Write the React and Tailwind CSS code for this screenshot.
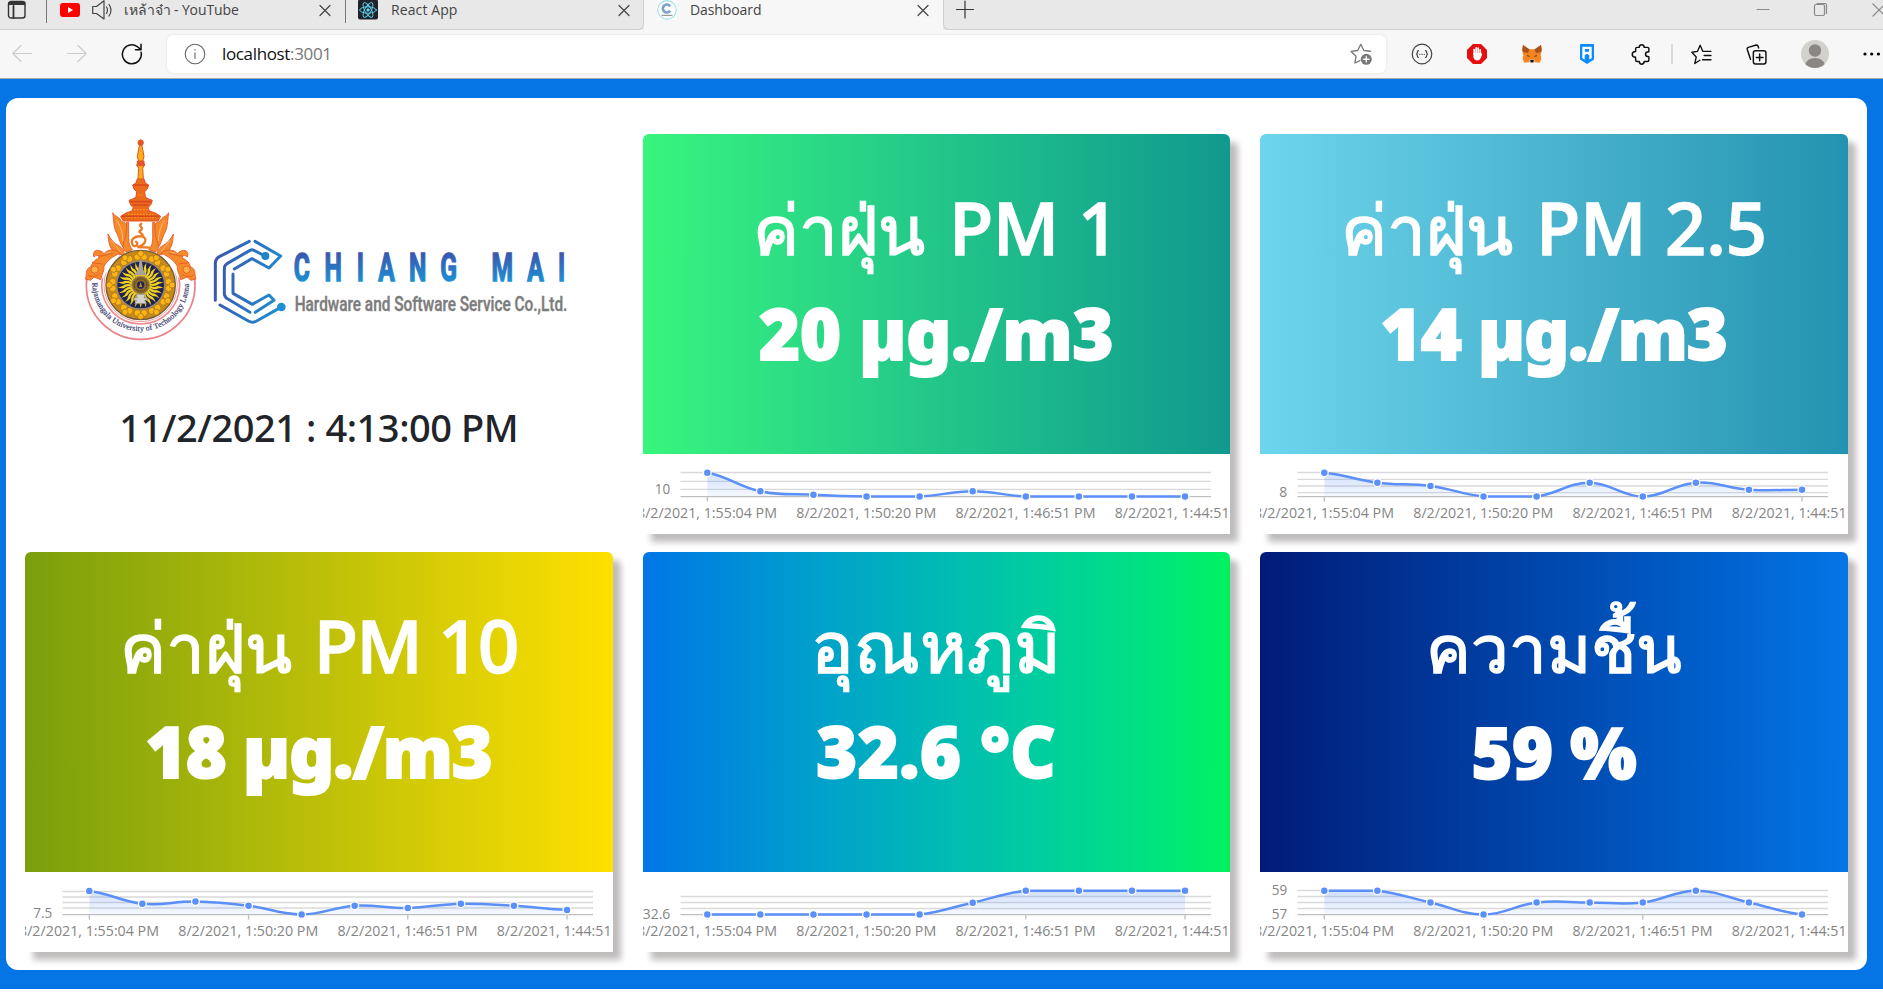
import React from "react";

const TIMES = ["8/2/2021, 1:55:04 PM", "8/2/2021, 1:50:20 PM", "8/2/2021, 1:46:51 PM", "8/2/2021, 1:44:51 PM"];

const CARDS = [
  {
    id: "pm1", thai: "ค่าฝุ่น", latin: "PM 1", value: "20 µg./m3",
    tone: "bg-linear-to-r from-[#38f57c] to-[#11998e]",
    titleFit: "text-[69px]", latinFit: "ml-[5px]", valueFit: "tracking-[0px]",
    grid: [18.5, 27.3, 35.3], pts: [18.7, 37.3, 40.7, 42.5, 42.5, 37.3, 42.5, 42.5, 42.5, 42.5],
    labels: [["10", 40]],
  },
  {
    id: "pm25", thai: "ค่าฝุ่น", latin: "PM 2.5", value: "14 µg./m3",
    tone: "bg-linear-to-r from-[#6dd5ed] to-[#2193b0]",
    titleFit: "text-[69px]", latinFit: "ml-[5px]", valueFit: "tracking-[-0.9px]",
    grid: [18.5, 25.3, 32, 38.7], pts: [18.7, 28.7, 32, 42.5, 42.5, 28.7, 42.5, 28.7, 35.7, 35.7],
    labels: [["8", 43]],
  },
  {
    id: "pm10", thai: "ค่าฝุ่น", latin: "PM 10", value: "18 µg./m3",
    tone: "bg-linear-to-r from-[#799f0c] to-[#ffe000]",
    titleFit: "text-[69px]", latinFit: "ml-[5px] tracking-[-1.5px]", valueFit: "tracking-[-0.9px]",
    grid: [19.5, 25, 30.5, 36], pts: [18.9, 31.7, 29.5, 33.7, 42.4, 33.7, 36, 31.7, 33.8, 38],
    labels: [["7.5", 46]],
  },
  {
    id: "temp", thai: "อุณหภูมิ", latin: "", value: "32.6 °C",
    tone: "bg-linear-to-r from-[#0575e6] to-[#00f260]",
    titleFit: "text-[71px]", latinFit: "", valueFit: "tracking-[0.5px]",
    grid: [24.5, 30.5, 36.5], pts: [42.5, 42.5, 42.5, 42.5, 42.5, 30.7, 18.7, 18.7, 18.7, 18.7],
    labels: [["32.6", 47]],
  },
  {
    id: "hum", thai: "ความชื้น", latin: "", value: "59 %",
    tone: "bg-linear-to-r from-[#021b79] to-[#0575e6]",
    titleFit: "text-[67px]", latinFit: "", valueFit: "tracking-[-0.5px]",
    grid: [18.5, 24.5, 30.5, 36.5], pts: [18.7, 18.7, 30.5, 42.5, 30.5, 30.5, 30.5, 18.7, 30.5, 42.5],
    labels: [["59", 23], ["57", 46.7]],
  },
];

const px = (i) => 64.3 + i * 53.08;

// Smoothed line whose control points never leave the value range.
function smooth(ys) {
  const lo = Math.min(...ys), hi = Math.max(...ys);
  const clamp = (v) => Math.max(lo, Math.min(hi, v));
  let d = `M${px(0)},${ys[0]}`;
  for (let i = 0; i < ys.length - 1; i++) {
    const a = ys[Math.max(i - 1, 0)], b = ys[i], c = ys[i + 1], e = ys[Math.min(i + 2, ys.length - 1)];
    const c1 = clamp(b + (c - a) * 0.2), c2 = clamp(c - (e - b) * 0.2);
    d += `C${px(i + 0.4)},${c1} ${px(i + 0.6)},${c2} ${px(i + 1)},${c}`;
  }
  return d;
}

function Chart({ id, grid, pts, labels }) {
  const line = smooth(pts);
  return (
    <svg className="block h-20 w-full font-['Open_Sans',sans-serif] text-[15px]" viewBox="0 0 587.5 80">
      <defs>
        <linearGradient id={`area-${id}`} x1="0" y1="0" x2="0" y2="1">
          <stop offset="0" stopColor="#5b8ff9" stopOpacity="0.28" />
          <stop offset="1" stopColor="#5b8ff9" stopOpacity="0.06" />
        </linearGradient>
      </defs>
      {grid.map((y) => <path key={y} d={`M37.5,${y}H568`} stroke="#d9d9d9" strokeWidth="1.3" />)}
      <path d="M37.5,42.6H568" stroke="#bfbfbf" strokeWidth="1.3" />
      {[0, 3, 6, 9].map((i) => <path key={i} d={`M${px(i)},42.6v5`} stroke="#bfbfbf" strokeWidth="1.3" />)}
      <path d={`${line}V42.6H${px(0)}Z`} fill={`url(#area-${id})`} />
      <path d={line} fill="none" stroke="#5b8ff9" strokeWidth="2.5" />
      {pts.map((y, i) => <circle key={i} cx={px(i)} cy={y} r="3.9" fill="#5b8ff9" stroke="#fff" strokeWidth="1.3" />)}
      {labels.map(([t, y]) => (
        <text key={t} x="27.3" y={y} textAnchor="end" fill="#858585" textLength={{ 1: 8, 2: 15.5, 3: 19, 4: 27.5 }[t.length]} lengthAdjust="spacingAndGlyphs">{t}</text>
      ))}
      {TIMES.map((t, i) => (
        <text key={t} x={px(i * 3) - 70.3} y="64.3" fill="#858585" textLength="140" lengthAdjust="spacingAndGlyphs">{t}</text>
      ))}
    </svg>
  );
}

function Card(c) {
  return (
    <section className="h-[400px] overflow-hidden rounded-t-md bg-white">
      <div className={`flex h-80 flex-col items-center gap-[19px] pt-[50px] text-[72px] leading-[86px] whitespace-nowrap text-white font-['Noto_Sans',sans-serif] ${c.tone}`}>
        <h2 className="font-medium [-webkit-text-stroke:1.6px_white]">
          <span className={c.titleFit}>{c.thai}</span>
          {c.latin && <span className={c.latinFit}> {c.latin}</span>}
        </h2>
        <p className={`text-[70px] font-black [-webkit-text-stroke:2px_white] ${c.valueFit}`}>{c.value}</p>
      </div>
      <Chart {...c} />
    </section>
  );
}

function Rays() {
  const rays = [];
  for (let i = 0; i < 26; i++) {
    rays.push(<path key={i} d="M-4,-26Q5,-40 -3,-50Q-4,-58 1,-69Q1,-56 6,-49Q10,-40 4,-26Z" transform={`rotate(${(i * 360) / 26})`} />);
  }
  return <g fill="#f2d21f">{rays}</g>;
}

function Petals() {
  const petals = [];
  for (let i = 0; i < 12; i++) {
    petals.push(
      <g key={i} transform={`rotate(${i * 30})`}>
        <circle cx="-10" cy="-84" r="10" />
        <circle cx="10" cy="-84" r="10" />
        <circle cx="0" cy="-94" r="9" />
      </g>
    );
  }
  return <g fill="#fdb515" stroke="#a8741a" strokeWidth="2.2">{petals}</g>;
}

function Wing() {
  return (
    <g fill="#f58a2a" stroke="#e4552a" strokeWidth="2.5" strokeLinejoin="round">
      <path d="M-84,-217C-80,-190 -82,-172 -70,-152C-64,-138 -62,-124 -52,-112C-42,-126 -40,-150 -42,-180C-46,-192 -58,-186 -62,-198C-68,-206 -78,-206 -84,-217Z" />
      <path d="M-98,-153C-96,-130 -96,-116 -80,-98L-50,-88C-48,-100 -54,-112 -66,-118C-78,-124 -90,-136 -98,-153Z" />
      <path d="M-36,-188V-140C-36,-124 -32,-114 -24,-106L-44,-98C-60,-112 -50,-130 -44,-150L-42,-188Z" />
      <path d="M-60,-96C-80,-112 -104,-104 -110,-94C-126,-112 -148,-104 -140,-84C-132,-92 -122,-88 -126,-80C-138,-76 -146,-66 -150,-54C-168,-48 -160,-32 -166,-18L-150,-14L-140,-24L-120,-16C-116,-34 -108,-44 -110,-56C-100,-74 -84,-86 -60,-96Z" />
      <circle cx="-138" cy="-46" r="11" fill="#fdb04a" />
      <path d="M-128,-88C-114,-84 -100,-94 -84,-94M-146,-68C-134,-62 -122,-68 -114,-62M-158,-30C-146,-22 -132,-26 -122,-34" fill="none" />
      <path d="M-72,-194C-60,-176 -55,-160 -53,-132M-88,-134C-76,-118 -68,-110 -60,-98M-104,-96L-90,-98" fill="none" stroke="#fdc08a" />
    </g>
  );
}

function Logos() {
  return (
    <svg className="block h-60 w-[510px]" viewBox="0 0 1530 720" role="img" aria-label="Chiang Mai Hardware and Software Service">
      <defs>
        <linearGradient id="blueMark" gradientUnits="userSpaceOnUse" x1="434" y1="480" x2="646" y2="520">
          <stop offset="0" stopColor="#3a58b0" />
          <stop offset="1" stopColor="#1c90d2" />
        </linearGradient>
        <linearGradient id="blueWord" gradientUnits="userSpaceOnUse" x1="0" y1="397" x2="0" y2="483">
          <stop offset="0" stopColor="#3a55ac" />
          <stop offset="1" stopColor="#1d8fd2" />
        </linearGradient>
        <path id="motto" d="M67,488A145,145 0 1 0 357,488" />
      </defs>

      <g transform="translate(212 495)">
        <circle r="163" fill="#fff" stroke="#ec8086" strokeWidth="5" />
        <circle r="117" fill="none" stroke="#ee8a8f" strokeWidth="5" />
        <circle r="110" fill="none" stroke="#f0a0a0" strokeWidth="3" />
        <path d="M-165,-20L-150,-110L-40,-170H40L150,-110L165,-20L120,-14L60,-95H-60L-120,-14Z" fill="#fff" />
        <g fill="#f6921e" stroke="#e2521f" strokeWidth="3" strokeLinejoin="round">
          <path d="M0,-436L6,-408L10,-385L6,-372L12,-360L6,-350L8,-320L12,-306L-12,-306L-8,-320L-6,-350L-12,-360L-6,-372L-10,-385L-6,-408Z" fill="#fbb016" />
          <circle cy="-427" r="8" fill="#e4562a" />
          <path d="M-10,-372H10V-358H-10Z" fill="#e4562a" />
          <path d="M-10,-318H10L14,-306L24,-300L20,-288L12,-280L14,-264L24,-258L35,-254L30,-240L22,-232L26,-222L44,-216L60,-206L52,-192H-52L-60,-206L-44,-216L-26,-222L-22,-232L-30,-240L-35,-254L-24,-258L-14,-264L-12,-280L-20,-288L-24,-300L-14,-306Z" fill="#ec6a1c" />
        </g>
        <path d="M-22,-300H22M-32,-250H32M-24,-240H24M-56,-206H56" stroke="#d9481c" strokeWidth="5" />
        <path d="M-46,-202H46M-38,-212H38M-20,-226H20M-8,-270H8" stroke="#fba31f" strokeWidth="3" strokeDasharray="5 4" />
        <Wing />
        <g transform="scale(-1 1)"><Wing /></g>
        <path d="M2,-184C-10,-176 12,-172 0,-164C-14,-158 14,-154 4,-146C-20,-148 -32,-136 -24,-120C-16,-112 -4,-122 -14,-130M4,-146C24,-140 12,-118 -10,-114L26,-112" fill="none" stroke="#ee7a22" strokeWidth="7" strokeLinecap="round" />
        <circle r="104" fill="#c98a1b" stroke="#6d5b3c" strokeWidth="4" />
        <Petals />
        <circle r="72" fill="#20244f" stroke="#93897a" strokeWidth="4" />
        <Rays />
        <path d="M-4,-68L0,-80L4,-68L8,-44L20,-30H-20L-8,-44Z" fill="#a9a493" />
        <circle r="27" fill="#8a6a2a" stroke="#b3924b" strokeWidth="3" />
        <circle r="19" fill="none" stroke="#3c3325" strokeWidth="3" strokeDasharray="4 3" />
        <circle r="11" fill="#20244f" />
        <path d="M0,-9L5,6H-5Z" fill="#b98f3a" />
        <path d="M-14,28H14L10,38H20V46H12L18,56H-18L-12,46H-20V38H-10Z" fill="#d5d3cc" stroke="#6e6a66" strokeWidth="1.5" />
      </g>
      <text className="font-['Liberation_Serif',serif] text-[23px]" fill="#3a3c72" stroke="#3a3c72" strokeWidth="0.6">
        <textPath href="#motto" textLength="452">Rajamangala University of Technology Lanna</textPath>
      </text>

      <g fill="none" stroke="url(#blueMark)" strokeWidth="9" strokeLinecap="round" strokeLinejoin="round">
        <path d="M538,364L448,410Q436,417 436,430V541" />
        <path d="M555,364L632,408L597,444L546,416L493,447" />
        <path d="M585,408L552,391Q546,388 540,391L471,431Q463,436 463,446V520Q463,530 470,535L540,577" />
        <path d="M489,462V520L547,553L597,525L612,541L556,577" />
        <path d="M450,555L535,603Q547,610 560,603L632,562" />
      </g>
      <circle cx="586" cy="408" r="12" fill="#1f86ca" />
      <circle cx="634" cy="561" r="13" fill="#1c90d2" />
      <g transform="scale(0.62 1)">
        <text className="font-['Roboto',sans-serif] text-[119px] font-bold" y="482" x="1083 1232 1388 1491 1640 1791 2040 2212 2361" fill="url(#blueWord)" stroke="url(#blueWord)" strokeWidth="4.5">CHIANGMAI</text>
      </g>
      <text className="font-['Roboto',sans-serif] text-[59px] font-medium" x="674" y="572" fill="#7c7c7c" stroke="#7c7c7c" strokeWidth="1.2" textLength="818" lengthAdjust="spacingAndGlyphs">Hardware and Software Service Co.,Ltd.</text>
    </svg>
  );
}

const stroke = { fill: "none", stroke: "currentColor", strokeLinecap: "round", strokeLinejoin: "round" };

function Icon({ children, className = "size-5", width = 1.2 }) {
  return <svg className={`block shrink-0 ${className}`} viewBox="0 0 20 20" {...stroke} strokeWidth={width}>{children}</svg>;
}

const Cross = () => <Icon className="size-5 text-[#444]" width={1.2}><path d="M5,5.5L15,15.5M15,5.5L5,15.5" /></Icon>;

function TabStrip() {
  return (
    <div className="flex h-[30px] overflow-hidden bg-[#e8e8e8] text-[14px] leading-5 text-[#444] font-['Open_Sans',sans-serif]">
      <div className="flex w-[644px] shrink-0 rounded-br-md border-r border-b border-[#d0d0d0]">
        <div className="flex h-[23px] w-[47px] shrink-0 border-r border-[#777] pl-[7px]">
          <Icon className="size-5 text-[#333]" width={1.4}>
            <rect x="1.5" y="1.5" width="16.5" height="16.5" rx="2.5" />
            <path d="M2,4H17.5M2,3H17.5M6.5,6V18" strokeWidth="1.8" />
          </Icon>
        </div>
        <div className="flex h-[23px] w-[299px] shrink-0 border-r border-[#777] pr-[10px] pl-[13px]">
          <Icon><rect y="3" width="20" height="14" rx="3" fill="#f00" stroke="none" /><path d="M8,7L13,10L8,13Z" fill="#fff" stroke="none" /></Icon>
          <Icon className="ml-3 size-5"><path d="M0.7,6.5H4.5L12,0.7V19L4.5,13.5H0.7Z" /><path d="M14.5,7Q16.5,10 14.5,13.5M17,4.5Q21,10 17,16" /></Icon>
          <span className="ml-3 grow tracking-[-0.1px] whitespace-nowrap">เหล้าจ๋า - YouTube</span>
          <Cross />
        </div>
        <div className="flex grow pr-[9px] pl-3">
          <Icon>
            <rect width="20" height="20" y="-0.5" rx="2" fill="#20232a" stroke="none" />
            <g stroke="#61dafb" strokeWidth="0.9">
              <ellipse cx="10" cy="10" rx="8.3" ry="3.2" />
              <ellipse cx="10" cy="10" rx="8.3" ry="3.2" transform="rotate(60 10 10)" />
              <ellipse cx="10" cy="10" rx="8.3" ry="3.2" transform="rotate(120 10 10)" />
              <circle cx="10" cy="10" r="1.2" fill="#61dafb" />
            </g>
          </Icon>
          <span className="ml-[13px] grow tracking-[0.1px]">React App</span>
          <Cross />
        </div>
      </div>
      <div className="flex w-[299px] shrink-0 bg-[#f7f7f7] pr-[10px] pl-[13px]">
        <Icon>
          <rect width="20" height="20" fill="#fff" stroke="none" />
          <circle cx="10" cy="10" r="9.3" stroke="#9fdfe6" />
          <path d="M12.5,5.5A4,4 0 1 0 12.5,11.5" stroke="#7f9fcf" strokeWidth="2.6" />
          <path d="M5,15.3H15" stroke="#999" />
        </Icon>
        <span className="ml-[13px] grow tracking-[-0.1px]">Dashboard</span>
        <Cross />
      </div>
      <div className="flex grow rounded-bl-md border-b border-l border-[#d0d0d0] pl-[11px]">
        <Icon className="size-5 text-[#333]"><path d="M1.5,9.5H18.5M10,1V18" /></Icon>
        <div className="ml-auto flex w-[130px] shrink-0 justify-between text-[#8a8a8a]">
          <Icon><path d="M4,9.5H16" /></Icon>
          <Icon><rect x="3.5" y="4.5" width="10" height="11" rx="1.5" /><path d="M6,3.5H14Q15.5,3.5 15.5,5V13.5" /></Icon>
          <Icon className="-mr-[6px] size-5"><path d="M4,4L16,16M16,4L4,16" /></Icon>
        </div>
      </div>
    </div>
  );
}

const Slot = ({ children }) => <div className="flex w-[55px] shrink-0 items-center justify-center">{children}</div>;

function Toolbar() {
  return (
    <div className="flex h-[49px] overflow-hidden border-b border-[#a8a8a8] bg-[#f7f7f7] text-[#111]">
      <div className="-ml-[6px] flex">
        <Slot><Icon className="size-5 text-[#ccc]"><path d="M19.5,9.5H0.8M9,1.5L0.8,9.5L9,17.5" /></Icon></Slot>
        <Slot><Icon className="size-5 text-[#ccc]"><path d="M0.5,9.5H19.2M11,1.5L19.2,9.5L11,17.5" /></Icon></Slot>
        <Slot><Icon className="size-[22px]" width={1.4}><path d="M18.3,8.5A8.6,8.6 0 1 1 14.8,3.2L18,6M18.2,1.2V6.2H13.2" /></Icon></Slot>
      </div>
      <div className="mt-[5px] ml-2 flex h-[38px] w-[1219px] shrink-0 items-center rounded-md bg-white pr-[14px] pl-[17px] shadow-[0_0_3px_rgba(0,0,0,0.1)]">
        <Icon className="size-[22px] text-[#666]" width={1}><circle cx="10" cy="10" r="8.9" /><path d="M10,9V14M10,6V6.3" /></Icon>
        <span className="ml-4 text-[17px] tracking-[-0.35px] text-[#111] font-['Open_Sans',sans-serif]">localhost<span className="text-[#777]">:3001</span></span>
        <Icon className="ml-auto size-[22px] text-[#777]">
          <path d="M9,16L4.5,18.2L5.5,12L1,7.7L7,6.8L9.8,1.2L12.6,6.8L18.6,7.5" />
          <circle cx="14.8" cy="14.8" r="5" fill="#777" stroke="none" />
          <path d="M14.8,12.3V17.3M12.3,14.8H17.3" stroke="#fff" />
        </Icon>
      </div>
      <div className="ml-2 flex">
        <Slot>
          <Icon className="size-[22px] text-[#444]" width={1.1}>
            <circle cx="10" cy="10" r="8.9" />
            <path d="M6.8,7Q5.8,7 5.8,8.2Q5.8,9.8 4.9,10Q5.8,10.2 5.8,11.8Q5.8,13 6.8,13M13.2,7Q14.2,7 14.2,8.2Q14.2,9.8 15.1,10Q14.2,10.2 14.2,11.8Q14.2,13 13.2,13M8,10.3H8.1M10,10.3H10.1M12,10.3H12.1" />
          </Icon>
        </Slot>
        <Slot>
          <Icon>
            <path d="M6,0H14L20,6V14L14,20H6L0,14V6Z" fill="#e60f0f" stroke="none" />
            <path d="M7.2,10V5.5M9.2,9V3.8M11.2,9V4M13.2,10V5.8" stroke="#fff" strokeWidth="1.7" />
            <path d="M6.4,9H14L15.2,10L13.8,14Q12.5,16.5 10,16.5Q6.4,16 6.4,12.5Z" fill="#fff" stroke="none" />
          </Icon>
        </Slot>
        <Slot>
          <Icon>
            <g stroke="none">
              <path d="M1,1L7.5,5.2H12.5L19,1L20,6L18.6,11L19.4,15L17.5,18.8L12,18L10,19L8,18L2.5,18.8L0.6,15L1.4,11L0,6Z" fill="#f5841f" />
              <path d="M1,1L7.5,5.4L6,9L1.3,8.2L0.4,6ZM19,1L12.5,5.4L14,9L18.7,8.2L19.6,6Z" fill="#a8501f" />
              <path d="M5,10.5L8.3,12.5L5.5,12.7ZM15,10.5L11.7,12.5L14.5,12.7Z" fill="#6b4a2a" />
              <path d="M6.5,16L8,18.5H12L13.5,16L11.5,15.5H8.5Z" fill="#d7c1b3" />
              <path d="M8.2,16H11.8L11.3,18.2H8.7Z" fill="#16120f" />
            </g>
          </Icon>
        </Slot>
        <Slot>
          <Icon>
            <path d="M3,1Q3,0 4,0H16Q17,0 17,1V15.5L10,20L3,15.5Z" fill="#0a8bff" stroke="none" />
            <path d="M5.3,2.8H14.7V14.2L12.3,15.6V11.2L10,9.8L7.7,11.2V15.6L5.3,14.2Z" fill="#fff" stroke="none" />
            <path d="M7.9,5H12V7.8H7.9Z" fill="#0a8bff" stroke="none" />
          </Icon>
        </Slot>
        <Slot>
          <Icon className="size-[21px]" width={1.4}>
            <path d="M5.8,3.2H7.8Q8,0.8 10.2,0.8Q12.4,0.8 12.6,3.2H15.6Q17,3.2 17,4.6V7.4Q13.8,7.4 13.8,9.8Q13.8,12.2 17,12.2V15.2Q17,16.6 15.6,16.6H12.6Q12.4,19.2 10.2,19.2Q8,19.2 7.8,16.6H5.8Q4.4,16.6 4.4,15.2V12.6Q1.2,12.4 1.2,9.9Q1.2,7.4 4.4,7.2V4.6Q4.4,3.2 5.8,3.2Z" />
          </Icon>
        </Slot>
        <div className="mt-[14px] mr-[1px] ml-[2px] h-5 w-[2px] bg-[#d8d8d8]" />
        <Slot>
          <Icon className="size-[21px]" width={1.3}>
            <path d="M8.5,15.5L3.6,18.6L5,12.3L0.8,7.9L6.2,7L8.7,1.2L11.2,7H19M12.5,11H19M11,15H19" />
          </Icon>
        </Slot>
        <Slot>
          <Icon className="size-[21px]" width={1.4}>
            <rect x="7" y="6.5" width="12" height="12.5" rx="2" />
            <path d="M13,9.5V16M9.8,12.8H16.2M4.3,14.5L1.2,5.2Q0.8,3.8 2.2,3.2L9.8,0.9Q11.5,0.7 12,3.8" />
          </Icon>
        </Slot>
        <div className="flex w-[61px] shrink-0 items-center justify-center">
          <svg className="size-7 rounded-full" viewBox="0 0 28 28">
            <rect width="28" height="28" fill="#d3d1cc" />
            <circle cx="14" cy="10.5" r="6.2" fill="#8a8784" />
            <path d="M4,25Q6,18 14,18Q22,18 24,25L20,28H8Z" fill="#8a8784" />
          </svg>
        </div>
        <div className="flex w-[38px] shrink-0 items-center pl-[18px]">
          <svg className="h-1 w-[18px]" viewBox="0 0 18 4"><circle cx="2" cy="2" r="1.6" /><circle cx="8.7" cy="2" r="1.6" /><circle cx="15.4" cy="2" r="1.6" /></svg>
        </div>
      </div>
    </div>
  );
}

export default function App() {
  return (
    <div className="h-[1007px] w-full overflow-hidden bg-white">
      <TabStrip />
      <Toolbar />
      <main className="h-[910px] bg-[#0575e6] pt-[19px] pr-4 pl-[6px]">
        <div className="grid h-[872px] grid-cols-3 content-start gap-x-[30px] gap-y-[18px] rounded-[12px] bg-white pt-9 pr-[19.5px] pl-[19px]">
          <section className="flex h-[400px] flex-col items-center">
            <div className="-mt-[14px] flex w-full pl-[45px]"><Logos /></div>
            <p className="mt-[41px] text-[38px] leading-[52px] font-medium tracking-[-0.45px] whitespace-nowrap text-[#212529] font-['Noto_Sans',sans-serif]">11/2/2021 : 4:13:00 PM</p>
          </section>
          {CARDS.map((c) => (
            <div key={c.id} className="rounded-t-md shadow-[8px_8px_6px_#bfbcbc]"><Card {...c} /></div>
          ))}
        </div>
      </main>
    </div>
  );
}
